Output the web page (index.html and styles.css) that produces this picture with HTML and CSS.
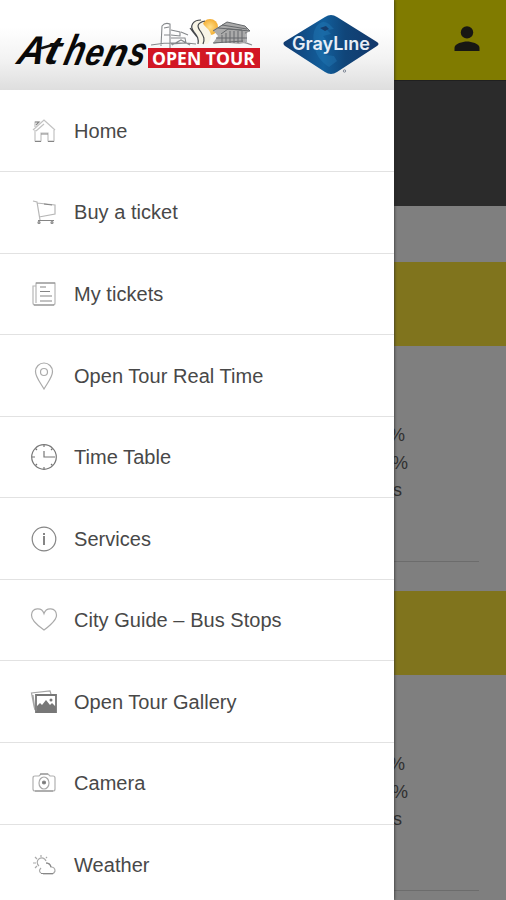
FILE: index.html
```html
<!DOCTYPE html>
<html lang="en">
<head>
<meta charset="utf-8">
<title>Athens Open Tour</title>
<link rel="stylesheet" href="styles.css">
</head>
<body>
<div class="app">
  <main class="page">
    <header class="topbar">
      <svg class="user" viewBox="0 0 26 26"><circle cx="13" cy="6.4" r="6.2"/><path d="M.5 25v-3.2c0-4.2 8.3-6.3 12.500-6.3s12.500 2.1 12.500 6.3V25z"/></svg>
    </header>
    <div class="hero"></div>
    <section class="offer">
      <div class="band"></div>
      <div class="details"><p class="first">%</p><p class="second">%</p><p class="third">s</p></div>
    </section>
    <section class="offer">
      <div class="band"></div>
      <div class="details"><p class="first">%</p><p class="second">%</p><p class="third">s</p></div>
    </section>
  </main>

  <aside class="drawer">
    <header class="brand">
      <svg class="logos" viewBox="0 0 394 90">
        <defs>
          <radialGradient id="sun"><stop offset="0" stop-color="#ffe08a"/><stop offset="1" stop-color="#f3ae35"/></radialGradient>
          <linearGradient id="blue" x1="0" x2="1"><stop offset="0" stop-color="#123b70"/><stop offset=".42" stop-color="#125f9c"/><stop offset=".65" stop-color="#104579"/><stop offset="1" stop-color="#12376a"/></linearGradient>
        </defs>
        <g class="athens" transform="translate(0 66) skewX(-14)">
          <text x="15" y="-2" font-size="40" textLength="27" lengthAdjust="spacingAndGlyphs">A</text>
          <text x="42" y="-2" font-size="40" textLength="15" lengthAdjust="spacingAndGlyphs">t</text>
          <text x="62" y="-1" font-size="43" textLength="20" lengthAdjust="spacingAndGlyphs">h</text>
          <text x="83" y="-1" font-size="37" textLength="18" lengthAdjust="spacingAndGlyphs">e</text>
          <text x="102" y="0" font-size="39" textLength="23" lengthAdjust="spacingAndGlyphs">n</text>
          <text x="126" y="-1" font-size="40" textLength="17" lengthAdjust="spacingAndGlyphs">s</text>
        </g>
        <path d="M42 48l17-5" fill="none" stroke="#111" stroke-width="2.500" stroke-linecap="round"/>
        <circle cx="210" cy="27" r="8" fill="url(#sun)"/>
        <g fill="none" stroke="#85888b" stroke-width="1.1">
          <path d="M161 46l1-20q3-4 8-2v24M164 28l5-1M164 35h6M171 30l9 2v4l-9-1M171 38h14l1 5-15 1M172 45l9-5 9 5M181 32l7 3M151 45q23-4 45-1"/>
          <path d="M214 43q20-5 38 2"/>
        </g>
        <path d="M202 20c-8-1-12 5-8 11 3 4 6 7 4 13h10c4-7 4-10 0-15-4-4-6-5-4-8z" fill="#f8f5e7"/>
        <g fill="none" stroke="#44474a" stroke-width="1.2"><path d="M201 20c-8 0-12 6-7 12 3 4 5 6 4 12M205 21c-9 2-8 6-4 11 3 5 4 7 2 12M190 28l3 4 4 5"/></g>
        <path d="M213 30l14-8 18 4 5 5-5 3v9l-6 1-20-2-6 1 5-7z" fill="#aaa"/>
        <g fill="none" stroke="#66696c" stroke-width="1"><path d="M213 31l14-9 18 4 5 5-22-2-7 5M218 28l24 2M222 25l25 4M222 35v8M226 33v10M230 31v12M234 31v12M238 31v12M242 31v11M246 32v10M216 38h31M213 43l30-2"/></g>
        <path d="M148 48h112v20H148z" fill="#d21724"/>
        <text class="open-tour" x="152" y="65" textLength="103" lengthAdjust="spacingAndGlyphs">OPEN TOUR</text>
        <path d="M284 42Q282.500 44 285 46l40 26q6 4 12 0l40-26q3-2 0-4l-40-25q-6-4-12 0z" fill="url(#blue)"/>
        <path d="M316 27q6-8 13-3l5 5-7 1 4 4-8 2 5 7-8 3 6 9 8 1 3 5-8 6q-14-9-15-24-2-9 2-16z" fill="#2982be" opacity=".35"/>
        <path d="M320 28l6-2 3 3-4 2z" fill="#153d6d"/>
        <text class="gray-line" x="292" y="50" textLength="78" lengthAdjust="spacingAndGlyphs">GrayLıne</text>
        <circle cx="344.500" cy="71" r="1.2" fill="none" stroke="#697485" stroke-width=".8"/>
      </svg>
    </header>
    <nav class="menu">
      <a class="item"><svg class="icon" viewBox="0 0 28 28"><path d="M3 13L14 3l11 10M5 13v11h6v-8h7v8h6V13M5 10V5h4M14 7l-8 7" opacity=".5"/><path d="M5 24.500h6M18 24.500h6M11 17h7M5 5h4l-3 3"/></svg><span>Home</span></a>
      <a class="item"><svg class="icon" viewBox="0 0 28 28"><path d="M3 3l4 1 3 18M7 5l18 2v9l-16 3" opacity=".6"/><path d="M8 22.500h16M14 6l8 1"/><circle cx="9" cy="24.500" r="1"/><circle cx="22" cy="24.500" r="1"/></svg><span>Buy a ticket</span></a>
      <a class="item"><svg class="icon" viewBox="0 0 28 28"><path d="M6 3h19v20q0 2-2 2H5q-2 0-2-2V6h3zM6 4v19" opacity=".6"/><path d="M6 3h19M4 25h20M10 7h6M10 11.500h10M10 16h12M10 21h12"/></svg><span>My tickets</span></a>
      <a class="item"><svg class="icon faint" viewBox="0 0 28 28"><path d="M14 27C10 20 5.500 15 5.500 9.500a8.500 8.500 0 0 1 17 0C22.500 15 18 20 14 27z"/><circle cx="14" cy="10" r="3.500"/></svg><span>Open Tour Real Time</span></a>
      <a class="item"><svg class="icon strong" viewBox="0 0 28 28"><circle cx="14" cy="14" r="12.300"/><path d="M14 8v6h11M14 2v2M14 24v2M2 14h3M5.500 5.500l1.500 1.500M21 7l1.500-1.500M5.500 22.500L7 21M21 21l1.500 1.500"/></svg><span>Time Table</span></a>
      <a class="item"><svg class="icon" viewBox="0 0 28 28"><circle cx="14" cy="14" r="11.800"/><path d="M14 8v2M14 11v9" stroke-width="2"/></svg><span>Services</span></a>
      <a class="item"><svg class="icon faint" viewBox="0 0 28 28"><path d="M14 24Q1 15 1.500 9C2 1 12 1 14 7.500 16 1 26 1 26.500 9 27 15 14 24 14 24z"/></svg><span>City Guide – Bus Stops</span></a>
      <a class="item"><svg class="icon strong" viewBox="0 0 28 28"><path d="M5 22l-1-4L1.500 5 20 3l1 3M3 7l2 15" opacity=".65"/><path d="M6 7h20v17H6z" stroke-width="1.800"/><path d="M7 23v-5l3-3 2 2 4-5 4 5 2-2 4 4v4z" fill="#777" stroke="none"/><circle cx="21" cy="12" r="1.500" fill="#777" stroke="none"/></svg><span>Open Tour Gallery</span></a>
      <a class="item"><svg class="icon" viewBox="0 0 28 28"><path d="M5 7h4l2-2h7l2 2h3q2 0 2 2v11q0 2-2 2H5q-2 0-2-2V9q0-2 2-2z" opacity=".65"/><path d="M10 5h8M5 22h18"/><ellipse cx="14" cy="14" rx="5" ry="6" opacity=".7"/><circle cx="14" cy="13.500" r="1.500" fill="#777"/></svg><span>Camera</span></a>
      <a class="item"><svg class="icon faint" viewBox="0 0 28 28"><path d="M9 15a4.500 4.500 0 1 1 7-5M11 4v2M5 6l2 2M3 12h3M5 17l2-2M17 6l-1 1"/><path d="M11 22q-3-2 0-5M16 12q4 0 5 4 4 0 4 4-1 3-4 3H13"/><path d="M11 22.500h12M16 12q4 0 5 4" stroke="#888"/></svg><span>Weather</span></a>
    </nav>
  </aside>
</div>
</body>
</html>
```

FILE: styles.css
```css
* { box-sizing: border-box; }
body { margin: 0; font-family: "Liberation Sans", Arial, sans-serif; }
.app { position: relative; width: 506px; height: 900px; overflow: hidden; background: #7f7f7f; }
.page { display: flex; flex-direction: column; }
.topbar { display: flex; height: 80px; padding: 26px 26px 0; justify-content: flex-end; background: #807b00; }
.user { width: 26px; height: 26px; fill: #171713; }
.hero { height: 126px; margin-bottom: 56px; background: #2b2b2b; border-top: 1px solid #202020; }
.offer { height: 329px; flex: none; }
.band { height: 84px; background: #80741d; }
.details { display: flex; flex-direction: column; height: 216px; width: 479px; padding: 75px 0 0 389px; border-bottom: 1px solid #6c6c6c; color: #303030; }
.details p { margin: 0; height: 27.5px; font-size: 18px; line-height: 28px; }
.details .second { padding-left: 3px; }
.details .third { padding-left: 4px; }
.drawer { position: absolute; left: 0; top: 0; width: 394px; height: 900px; background: #fff; box-shadow: 0 0 3px #222; overflow: hidden; }
.brand { height: 90px; background: linear-gradient(#fff 30%, #f3f3f3 65%, #dedede); }
.logos { display: block; width: 394px; height: 90px; }
.athens { font-family: "Liberation Sans", sans-serif; font-style: italic; font-weight: bold; fill: #090909; }
.open-tour { font: bold 18px "Open Sans", sans-serif; fill: #fff; }
.gray-line { font: 600 18px "Inter", sans-serif; fill: #e8eef7; }
.menu { display: grid; grid-auto-rows: 81.55px; padding-top: .6px; }
.item { display: flex; align-items: center; gap: 16px; padding-left: 30px; border-bottom: 1.5px solid #e2e2e2; color: #484848; font-size: 20px; line-height: 24px; letter-spacing: .04px; }
.icon { width: 28px; height: 28px; flex: none; fill: none; stroke: #858585; stroke-width: 1.2; }
.faint { stroke: #aaa; }
.strong { stroke: #777; }
```
